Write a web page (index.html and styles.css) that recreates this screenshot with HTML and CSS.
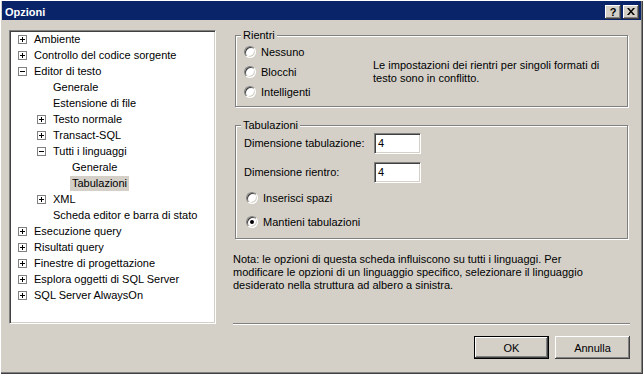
FILE: index.html
```html
<!DOCTYPE html>
<html lang="it">
<head>
    <meta charset="UTF-8">
    <meta name="viewport" content="width=device-width, initial-scale=1.0">
    <title>Opzioni</title>
    <link rel="stylesheet" href="styles.css">
</head>
<body>
    <div class="window">
        <div class="titlebar">
            <span class="title">Opzioni</span>
            <div class="caption-buttons">
                <span class="cap-btn">?</span>
                <span class="cap-btn">
                    <svg width="8" height="7" viewBox="0 0 8 7"><path d="M0 0h2l2 2.5L6 0h2L5 3.5 8 7H6L4 4.5 2 7H0l3-3.5z" fill="#000"/></svg>
                </span>
            </div>
        </div>

        <div class="content">
            <!-- Tree of option pages -->
            <ul class="tree">
                <li class="node lvl0"><svg class="exp" viewBox="0 0 9 9"><rect x=".5" y=".5" width="8" height="8" fill="#fff" stroke="#808080"/><path d="M2 4.5h5M4.5 2v5" stroke="#000"/></svg><span class="label">Ambiente</span></li>
                <li class="node lvl0"><svg class="exp" viewBox="0 0 9 9"><rect x=".5" y=".5" width="8" height="8" fill="#fff" stroke="#808080"/><path d="M2 4.5h5M4.5 2v5" stroke="#000"/></svg><span class="label">Controllo del codice sorgente</span></li>
                <li class="node lvl0"><svg class="exp" viewBox="0 0 9 9"><rect x=".5" y=".5" width="8" height="8" fill="#fff" stroke="#808080"/><path d="M2 4.5h5" stroke="#000"/></svg><span class="label">Editor di testo</span></li>
                <li class="node lvl1"><span class="exp"></span><span class="label">Generale</span></li>
                <li class="node lvl1"><span class="exp"></span><span class="label">Estensione di file</span></li>
                <li class="node lvl1"><svg class="exp" viewBox="0 0 9 9"><rect x=".5" y=".5" width="8" height="8" fill="#fff" stroke="#808080"/><path d="M2 4.5h5M4.5 2v5" stroke="#000"/></svg><span class="label">Testo normale</span></li>
                <li class="node lvl1"><svg class="exp" viewBox="0 0 9 9"><rect x=".5" y=".5" width="8" height="8" fill="#fff" stroke="#808080"/><path d="M2 4.5h5M4.5 2v5" stroke="#000"/></svg><span class="label">Transact-SQL</span></li>
                <li class="node lvl1"><svg class="exp" viewBox="0 0 9 9"><rect x=".5" y=".5" width="8" height="8" fill="#fff" stroke="#808080"/><path d="M2 4.5h5" stroke="#000"/></svg><span class="label">Tutti i linguaggi</span></li>
                <li class="node lvl2"><span class="exp"></span><span class="label">Generale</span></li>
                <li class="node lvl2"><span class="exp"></span><span class="label selected">Tabulazioni</span></li>
                <li class="node lvl1"><svg class="exp" viewBox="0 0 9 9"><rect x=".5" y=".5" width="8" height="8" fill="#fff" stroke="#808080"/><path d="M2 4.5h5M4.5 2v5" stroke="#000"/></svg><span class="label">XML</span></li>
                <li class="node lvl1"><span class="exp"></span><span class="label">Scheda editor e barra di stato</span></li>
                <li class="node lvl0"><svg class="exp" viewBox="0 0 9 9"><rect x=".5" y=".5" width="8" height="8" fill="#fff" stroke="#808080"/><path d="M2 4.5h5M4.5 2v5" stroke="#000"/></svg><span class="label">Esecuzione query</span></li>
                <li class="node lvl0"><svg class="exp" viewBox="0 0 9 9"><rect x=".5" y=".5" width="8" height="8" fill="#fff" stroke="#808080"/><path d="M2 4.5h5M4.5 2v5" stroke="#000"/></svg><span class="label">Risultati query</span></li>
                <li class="node lvl0"><svg class="exp" viewBox="0 0 9 9"><rect x=".5" y=".5" width="8" height="8" fill="#fff" stroke="#808080"/><path d="M2 4.5h5M4.5 2v5" stroke="#000"/></svg><span class="label">Finestre di progettazione</span></li>
                <li class="node lvl0"><svg class="exp" viewBox="0 0 9 9"><rect x=".5" y=".5" width="8" height="8" fill="#fff" stroke="#808080"/><path d="M2 4.5h5M4.5 2v5" stroke="#000"/></svg><span class="label">Esplora oggetti di SQL Server</span></li>
                <li class="node lvl0"><svg class="exp" viewBox="0 0 9 9"><rect x=".5" y=".5" width="8" height="8" fill="#fff" stroke="#808080"/><path d="M2 4.5h5M4.5 2v5" stroke="#000"/></svg><span class="label">SQL Server AlwaysOn</span></li>
            </ul>

            <div class="panel">
                <fieldset class="group">
                    <legend>Rientri</legend>
                    <div class="indent-body">
                        <div class="radio-list">
                            <div class="radio-row"><span class="radio"></span>Nessuno</div>
                            <div class="radio-row"><span class="radio"></span>Blocchi</div>
                            <div class="radio-row"><span class="radio"></span>Intelligenti</div>
                        </div>
                        <p class="hint">Le impostazioni dei rientri per singoli formati di<br>testo sono in conflitto.</p>
                    </div>
                </fieldset>

                <fieldset class="group tabs-group">
                    <legend>Tabulazioni</legend>
                    <div class="field-row">
                        <span class="field-label">Dimensione tabulazione:</span>
                        <input class="num" type="text" value="4">
                    </div>
                    <div class="field-row">
                        <span class="field-label">Dimensione rientro:</span>
                        <input class="num" type="text" value="4">
                    </div>
                    <div class="radio-row tab-radio"><span class="radio"></span>Inserisci spazi</div>
                    <div class="radio-row tab-radio"><span class="radio checked"></span>Mantieni tabulazioni</div>
                </fieldset>

                <p class="note">Nota: le opzioni di questa scheda influiscono su tutti i linguaggi. Per<br>modificare le opzioni di un linguaggio specifico, selezionare il linguaggio<br>desiderato nella struttura ad albero a sinistra.</p>

                <div class="separator"></div>

                <div class="actions">
                    <button class="btn default">OK</button>
                    <button class="btn">Annulla</button>
                </div>
            </div>
        </div>
    </div>
</body>
</html>
```

FILE: styles.css
```css
html, body { margin: 0; padding: 0; }
body { font-family: "Liberation Sans", Arial, sans-serif; font-size: 11px; color: #000; background: #d4d0c8; }

.window {
    width: 643px;
    height: 374px;
    box-sizing: border-box;
    padding: 1px 2px 2px 2px;
    background: #d4d0c8;
    box-shadow: inset 1px 1px #fff, inset -1px -1px #404040, inset -2px -2px #808080;
}

/* Title bar */
.titlebar {
    height: 19px;
    box-sizing: border-box;
    padding: 2px 2px 0 3px;
    background: #0a246a;
    display: flex;
    align-items: center;
    justify-content: space-between;
}
.title { color: #fff; font-weight: bold; font-size: 11px; }
.caption-buttons { display: flex; gap: 2px; }
.cap-btn {
    width: 16px;
    height: 14px;
    box-sizing: border-box;
    background: #d4d0c8;
    box-shadow: inset -1px -1px #404040, inset 1px 1px #fff, inset -2px -2px #808080;
    display: flex;
    align-items: center;
    justify-content: center;
    font-weight: bold;
    font-size: 11px;
    line-height: 14px;
}

.content {
    display: flex;
    align-items: flex-start;
    padding: 9px 0 0 7px;
    gap: 17px;
}

/* Tree */
.tree {
    list-style: none;
    margin: 1px 0 0 0;
    padding: 0;
    width: 207px;
    height: 294px;
    box-sizing: border-box;
    background: #fff;
    border: 1px solid;
    border-color: #808080 #fff #fff #808080;
    box-shadow: inset 1px 1px #404040, inset -1px -1px #d4d0c8;
}
.node { display: flex; align-items: center; height: 16px; white-space: nowrap; }
.node.lvl0 { padding-left: 8px; }
.node.lvl1 { padding-left: 27px; }
.node.lvl2 { padding-left: 46px; }
.exp { width: 9px; height: 9px; flex: none; display: block; }
.label { margin-left: 5px; padding: 0 2px; line-height: 15px; }
.label.selected { background: #d4d0c8; }

/* Right panel */
.panel { width: 397px; }

.group {
    margin: 0 2px 0 2px;
    padding: 0 8px 4px 8px;
    border: 1px solid #808080;
    box-shadow: inset 1px 1px #fff, 1px 1px #fff;
    min-width: 0;
}
.group legend {
    margin-left: -3px;
    padding: 0 2px;
    line-height: 13px;
    background: #d4d0c8;
}

.indent-body { display: flex; align-items: center; }
.radio-list { width: 129px; flex: none; }
.radio-row { display: flex; align-items: center; height: 20px; gap: 5px; }
.hint { margin: 0; line-height: 13px; }

.radio {
    width: 12px;
    height: 12px;
    box-sizing: border-box;
    border-radius: 50%;
    background: #fff;
    border: 1px solid;
    border-color: #808080 #fff #fff #808080;
    box-shadow: inset 1px 1px #404040, inset -1px -1px #d4d0c8;
    display: flex;
    align-items: center;
    justify-content: center;
    flex: none;
}
.radio.checked::after {
    content: "";
    width: 4px;
    height: 4px;
    border-radius: 50%;
    background: #000;
}

.tabs-group { margin-top: 12px; padding-bottom: 6px; }
.field-row { display: flex; align-items: center; height: 22px; }
.field-row + .field-row { margin-top: 7px; }
.field-label { width: 130px; flex: none; }
.num {
    width: 47px;
    height: 21px;
    box-sizing: border-box;
    margin: 0;
    padding: 0 3px;
    font-family: inherit;
    font-size: 11px;
    background: #fff;
    border: 1px solid;
    border-color: #808080 #fff #fff #808080;
    box-shadow: inset 1px 1px #404040, inset -1px -1px #d4d0c8;
    outline: none;
}
.tab-radio { padding-left: 2px; margin-top: 4px; }
.field-row + .tab-radio { margin-top: 5px; }

.note { margin: 14px 0 0 0; line-height: 13px; }

.separator {
    margin-top: 31px;
    height: 1px;
    background: #808080;
    border-bottom: 1px solid #fff;
}

.actions { display: flex; justify-content: flex-end; gap: 6px; margin-top: 11px; }
.btn {
    width: 75px;
    height: 23px;
    box-sizing: border-box;
    margin: 0;
    padding: 0;
    font-family: inherit;
    font-size: 11px;
    color: #000;
    background: #d4d0c8;
    border: none;
    box-shadow: inset -1px -1px #404040, inset 1px 1px #fff, inset -2px -2px #808080;
}
.btn.default {
    border: 1px solid #000;
    box-shadow: inset -1px -1px #404040, inset 1px 1px #fff, inset -2px -2px #808080;
}
```
